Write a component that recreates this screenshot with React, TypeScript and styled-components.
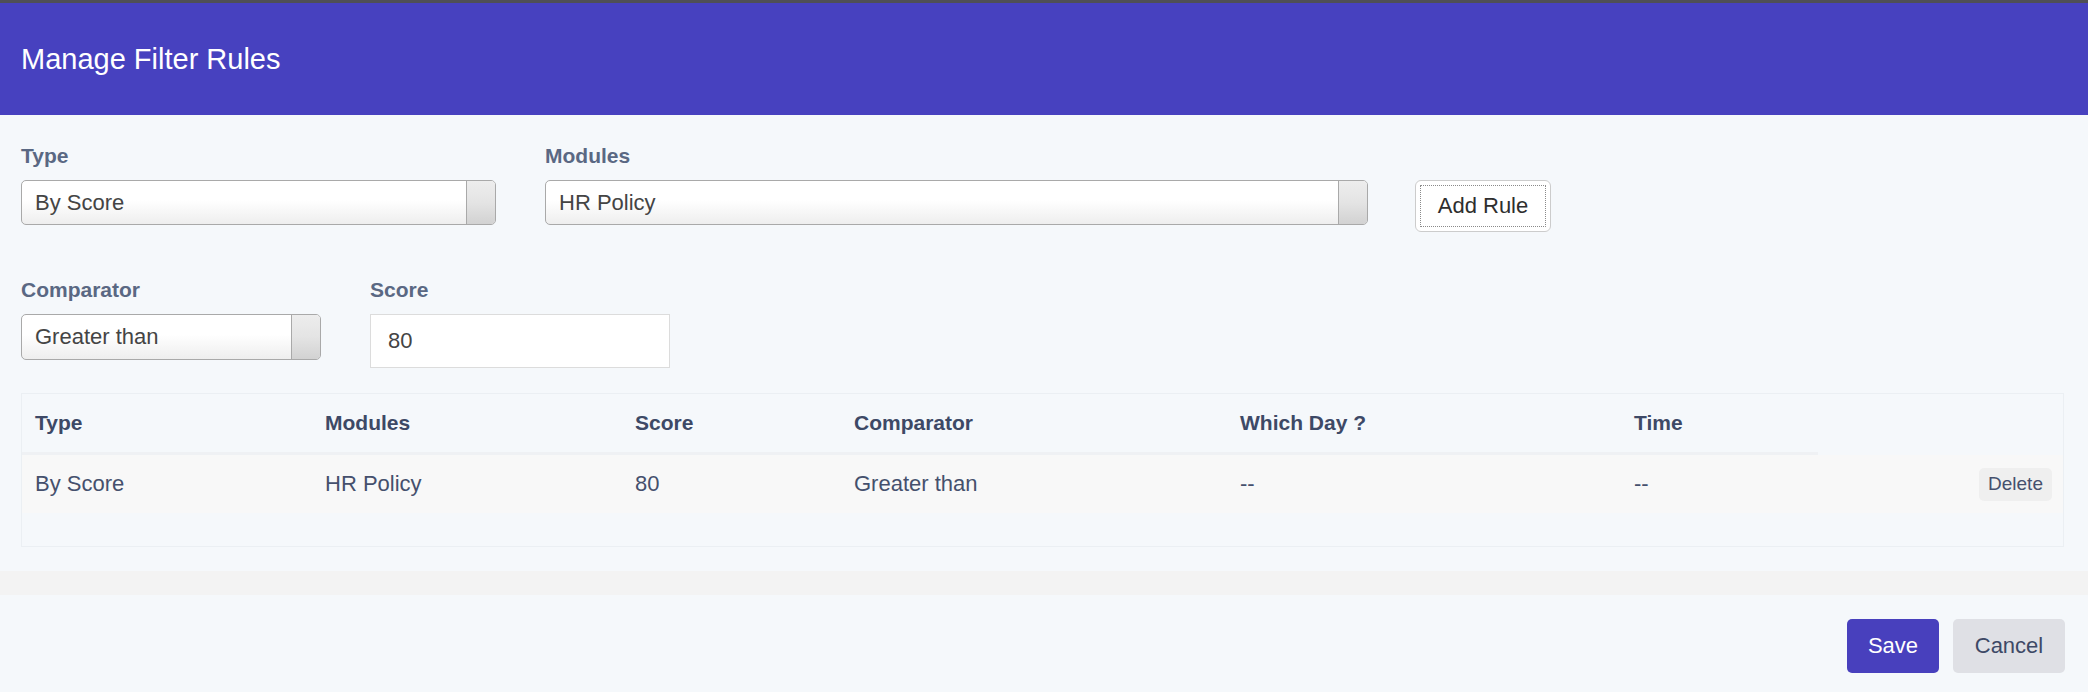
import styled, { createGlobalStyle } from 'styled-components'

const GlobalStyle = createGlobalStyle`
  html, body {
    margin: 0;
    padding: 0;
    background: #f5f8fb;
    font-family: "Liberation Sans", Arial, Helvetica, sans-serif;
  }
  * { box-sizing: border-box; }
`

interface Rule {
  type: string;
  module: string;
  score: string;
  comparator: string;
  day: string;
  time: string;
}

const rules: Rule[] = [
  { type: 'By Score', module: 'HR Policy', score: '80', comparator: 'Greater than', day: '--', time: '--' },
]

const Modal = styled.div`
  width: 2088px;
  height: 692px;
  border-top: 3px solid #4f4f55;
  background: #f5f8fb;
  display: flex;
  flex-direction: column;
`

const Header = styled.header`
  height: 112px;
  background: #4741bf;
  display: flex;
  align-items: center;
  padding: 0 21px;
`

const Title = styled.h2`
  margin: 0;
  font-size: 29px;
  font-weight: 400;
  color: #ffffff;
`

const Body = styled.section`
  padding: 29px 24px 0 21px;
`

const FormRow = styled.div<{ bottom: number }>`
  display: flex;
  align-items: flex-start;
  margin-bottom: ${p => p.bottom}px;
`

const Field = styled.div<{ width: number; gap?: number }>`
  width: ${p => p.width}px;
  margin-right: ${p => p.gap ?? 0}px;
  display: flex;
  flex-direction: column;
`

const Label = styled.label`
  font-size: 21px;
  line-height: 24px;
  font-weight: 700;
  color: #5a6883;
  margin-bottom: 12px;
`

const SelectBox = styled.div<{ height: number }>`
  height: ${p => p.height}px;
  display: flex;
  border: 1px solid #a9a9a9;
  border-radius: 5px;
  background: linear-gradient(180deg, #ffffff 45%, #eeeeee 100%);
  overflow: hidden;
`

const SelectValue = styled.span`
  flex: 1;
  display: flex;
  align-items: center;
  padding-left: 13px;
  font-size: 22px;
  color: #444444;
`

const SelectHandle = styled.span`
  width: 29px;
  border-left: 1px solid #a9a9a9;
  background: linear-gradient(180deg, #ededed 0%, #e4e4e4 50%, #d2d2d2 100%);
`

const ScoreInput = styled.input`
  height: 54px;
  width: 100%;
  border: 1px solid #dcdcdc;
  background: #ffffff;
  padding: 0 0 0 17px;
  font-family: inherit;
  font-size: 22px;
  color: #444444;
  outline: none;
`

const AddButton = styled.button`
  margin-top: 36px;
  width: 136px;
  height: 52px;
  background: #ffffff;
  border: 1px solid #cccccc;
  border-radius: 6px;
  outline: 1px dotted #8a8a8a;
  outline-offset: -6px;
  font-family: inherit;
  font-size: 22px;
  color: #2e2e2e;
  padding: 0;
`

const RulesTable = styled.div`
  border: 1px solid #ebeff3;
  padding-bottom: 33px;
`

const TableRow = styled.div<{ head?: boolean }>`
  display: grid;
  grid-template-columns: 290px 310px 219px 386px 394px 197px 1fr;
  height: ${p => (p.head ? 61 : 58)}px;
  background: ${p => (p.head ? 'transparent' : '#f8f8f8')};
`

const HeadCell = styled.div<{ last?: boolean }>`
  display: flex;
  align-items: center;
  padding-left: 13px;
  font-size: 21px;
  font-weight: 700;
  color: #3d4966;
  border-bottom: 3px solid ${p => (p.last ? 'transparent' : '#eff1f4')};
`

const Cell = styled.div<{ right?: boolean }>`
  display: flex;
  align-items: center;
  justify-content: ${p => (p.right ? 'flex-end' : 'flex-start')};
  padding: 0 ${p => (p.right ? 11 : 0)}px 0 ${p => (p.right ? 0 : 13)}px;
  font-size: 22px;
  color: #45506d;
`

const DeleteButton = styled.button`
  height: 33px;
  width: 73px;
  border: none;
  border-radius: 5px;
  background: #efefef;
  font-family: inherit;
  font-size: 19px;
  color: #45506d;
  padding: 0;
`

const Divider = styled.div`
  margin-top: 24px;
  height: 24px;
  background: #f3f3f3;
`

const Footer = styled.footer`
  display: flex;
  justify-content: flex-end;
  gap: 14px;
  padding: 24px 23px 0 21px;
`

const ActionButton = styled.button<{ primary?: boolean }>`
  height: 54px;
  width: ${p => (p.primary ? 92 : 112)}px;
  border: none;
  border-radius: 5px;
  background: ${p => (p.primary ? '#4840bd' : '#dfe0e5')};
  color: ${p => (p.primary ? '#ffffff' : '#3d4966')};
  font-family: inherit;
  font-size: 22px;
  padding: 0;
`

const columns = ['Type', 'Modules', 'Score', 'Comparator', 'Which Day ?', 'Time']

const App = () => {
  return (
    <>
      <GlobalStyle />
      <Modal>
        <Header>
          <Title>Manage Filter Rules</Title>
        </Header>
        <Body>
          <FormRow bottom={46}>
            <Field width={475} gap={49}>
              <Label>Type</Label>
              <SelectBox height={45}>
                <SelectValue>By Score</SelectValue>
                <SelectHandle />
              </SelectBox>
            </Field>
            <Field width={823} gap={47}>
              <Label>Modules</Label>
              <SelectBox height={45}>
                <SelectValue>HR Policy</SelectValue>
                <SelectHandle />
              </SelectBox>
            </Field>
            <AddButton>Add Rule</AddButton>
          </FormRow>
          <FormRow bottom={25}>
            <Field width={300} gap={49}>
              <Label>Comparator</Label>
              <SelectBox height={46}>
                <SelectValue>Greater than</SelectValue>
                <SelectHandle />
              </SelectBox>
            </Field>
            <Field width={300}>
              <Label>Score</Label>
              <ScoreInput defaultValue="80" />
            </Field>
          </FormRow>
          <RulesTable>
            <TableRow head>
              {columns.map(c => (
                <HeadCell key={c}>{c}</HeadCell>
              ))}
              <HeadCell last />
            </TableRow>
            {rules.map((r, i) => (
              <TableRow key={i}>
                <Cell>{r.type}</Cell>
                <Cell>{r.module}</Cell>
                <Cell>{r.score}</Cell>
                <Cell>{r.comparator}</Cell>
                <Cell>{r.day}</Cell>
                <Cell>{r.time}</Cell>
                <Cell right>
                  <DeleteButton>Delete</DeleteButton>
                </Cell>
              </TableRow>
            ))}
          </RulesTable>
        </Body>
        <Divider />
        <Footer>
          <ActionButton primary>Save</ActionButton>
          <ActionButton>Cancel</ActionButton>
        </Footer>
      </Modal>
    </>
  )
}

export default App
